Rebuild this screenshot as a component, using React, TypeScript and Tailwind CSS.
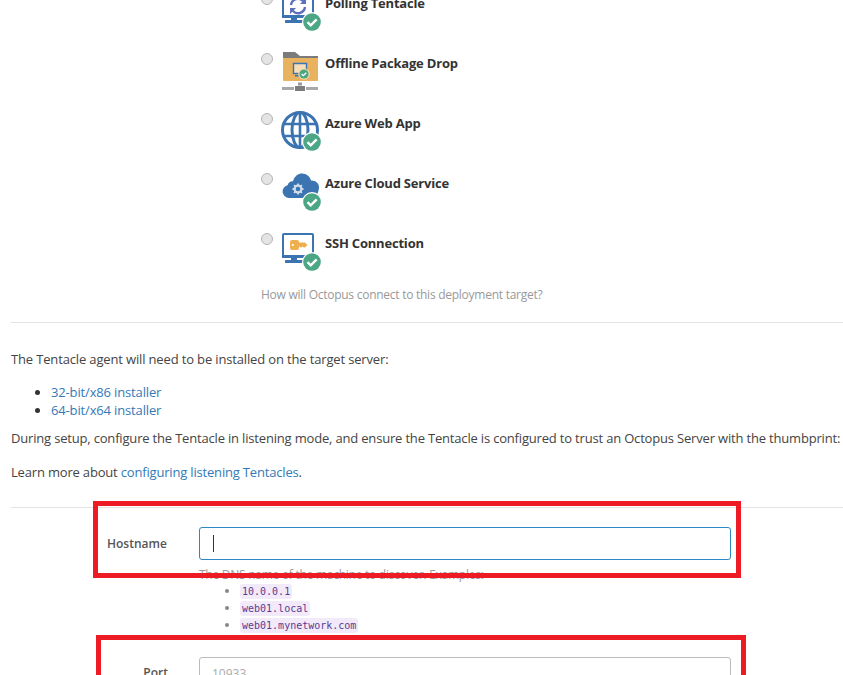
import React from "react";

const Badge = () => (
  <g>
    <circle cx="30" cy="30" r="10" fill="#fff" />
    <circle cx="30" cy="30" r="8.8" fill="#4aa685" />
    <path d="M25.5 30.2l3.2 3.2 6-6" fill="none" stroke="#fff" strokeWidth="2.4" />
  </g>
);

const Monitor = ({ children }: { children?: React.ReactNode }) => (
  <g>
    <path d="M1 3a1 1 0 0 1 1-1h28a1 1 0 0 1 1 1v22h-30z" fill="#fff" stroke="#3b74b0" strokeWidth="2" />
    <rect x="0" y="23" width="24" height="3" fill="#3b74b0" />
    <rect x="9" y="26" width="6" height="2" fill="#3b74b0" />
    <rect x="3" y="28" width="18" height="3" rx="0.5" fill="#3b74b0" />
    {children}
  </g>
);

const icons: Record<string, React.ReactNode> = {
  polling: (
    <Monitor>
      <path d="M9 13a7 7 0 0 1 12-4l2 2M23 15a7 7 0 0 1-12 4l-2-2" fill="none" stroke="#5d6fbd" strokeWidth="2.4" />
      <path d="M24 6v6h-6zM8 22v-6h6z" fill="#5d6fbd" />
    </Monitor>
  ),
  offline: (
    <g>
      <path d="M1 6V0h12l5 4h18v2z" fill="#7b7b7b" />
      <rect x="1" y="6" width="35" height="23" rx="1" fill="#e8b25e" />
      <path d="M11.5 11.500h13v10h-13z" fill="#f6dfb8" stroke="#3b74b0" strokeWidth="1.4" />
      <rect x="13" y="23" width="7" height="1.5" fill="#3b74b0" />
      <circle cx="22" cy="22" r="5.8" fill="#f3d9a8" />
      <circle cx="22" cy="22" r="4.6" fill="#4aa685" />
      <path d="M19.6 22l1.700 1.700 3-3" fill="none" stroke="#fff" strokeWidth="1.3" />
      <rect x="16" y="30.500" width="4" height="3" fill="#9a9a9a" />
      <rect x="13" y="34" width="10" height="5" fill="#7d7d7d" />
      <rect x="0" y="35" width="12" height="3" fill="#a8a8a8" />
      <rect x="24" y="35" width="12" height="3" fill="#a8a8a8" />
    </g>
  ),
  web: (
    <g fill="none" stroke="#3b74b0" strokeWidth="3">
      <circle cx="18" cy="18" r="17.500" />
      <ellipse cx="18" cy="18" rx="8" ry="17.500" />
      <path d="M18 0v36M1.500 12h33M1.500 24h33" strokeWidth="2.600" />
    </g>
  ),
  cloud: (
    <g transform="translate(0 -6)">
      <path d="M7 32a6.500 6.500 0 0 1-1.500-12.800C6.500 16 9 14.800 11 15.200 12.500 9.800 16.500 7.500 20 7.500c4.500 0 8 3 9 7 4-.5 8 2.500 8 6.500 0 5-3 11-7 11z" fill="#3b74b0" />
      <circle cx="16" cy="23" r="3.400" fill="none" stroke="#cfdcec" strokeWidth="2.200" />
      <path d="M16 17.500v2.200M16 26.300v2.200M10.500 23h2.200M19.300 23h2.200M12.100 19.100l1.600 1.600M18.300 25.300l1.600 1.600M12.100 26.900l1.600-1.600M18.300 20.700l1.600-1.600" stroke="#cfdcec" strokeWidth="1.800" />
    </g>
  ),
  ssh: (
    <Monitor>
      <rect x="8" y="8" width="9" height="10" rx="2" fill="#eeb04f" />
      <path d="M16 10.500h7l2.500 2.500-2.500 2.500h-1.500l-1-1-1 1h-1l-1-1-1 1h-1z" fill="#eeb04f" />
      <circle cx="10.800" cy="13" r="1.100" fill="#fff" />
    </Monitor>
  ),
};

const targets = [
  { key: "polling", label: "Polling Tentacle", badge: true },
  { key: "offline", label: "Offline Package Drop", badge: false },
  { key: "web", label: "Azure Web App", badge: true },
  { key: "cloud", label: "Azure Cloud Service", badge: true },
  { key: "ssh", label: "SSH Connection", badge: true },
];

const Radio = () => (
  <span className="block w-[12px] h-[12px] rounded-full bg-[#e4e4e4] border border-[#b5b5b5]" />
);

const Code = ({ children }: { children: React.ReactNode }) => (
  <code className="rounded-[3px] bg-[#f2eaf8] px-[2px] py-[2px] text-[#5b3a94] text-[10px] leading-[14px]" style={{ fontFamily: '"DejaVu Sans Mono", monospace' }}>
    {children}
  </code>
);

export default function App() {
  return (
    <div
      className="relative w-[843px] h-[675px] overflow-hidden bg-white text-[13px] text-[#444]"
      style={{ fontFamily: '"Open Sans", "Noto Sans", sans-serif' }}
    >
      <div className="px-[11px] pr-0 -mt-[28px]">
        <div className="pl-[250px]">
          {targets.map((t) => (
            <div key={t.key} className="flex h-[60px]">
              <div className="pt-[21px] w-[21px]"><Radio /></div>
              <svg width="40" height="40" viewBox="0 0 40 40" className="mt-[20px] overflow-visible">
                {icons[t.key]}
                {t.badge && <Badge />}
              </svg>
              <div className="pl-[3px] pt-[21px] font-bold text-[13px] leading-[20px] text-[#333] tracking-[-0.2px]">{t.label}</div>
            </div>
          ))}
          <p className="text-[12px] leading-[16px] mt-[15px] text-[#999] tracking-[-0.26px]">How will Octopus connect to this deployment target?</p>
        </div>
        <hr className="mt-[19px] border-[#e3e3e3]" />
        <p className="mt-[26px] leading-[20px] tracking-[-0.15px]">The Tentacle agent will need to be installed on the target server:</p>
        <ul className="mt-[14px] pl-[40px] list-disc leading-[18px] tracking-[-0.15px] text-[#333]">
          <li><a className="text-[#337ab7]">32-bit/x86 installer</a></li>
          <li><a className="text-[#337ab7]">64-bit/x64 installer</a></li>
        </ul>
        <p className="mt-[9px] leading-[20px] tracking-[-0.18px] whitespace-nowrap">During setup, configure the Tentacle in listening mode, and ensure the Tentacle is configured to trust an Octopus Server with the thumbprint:</p>
        <p className="mt-[14px] leading-[20px] tracking-[-0.18px]">Learn more about <a className="text-[#337ab7]">configuring listening Tentacles</a>.</p>
        <hr className="mt-[25px] border-[#e3e3e3]" />
        <div className="mt-[19px] flex items-center">
          <label className="w-[188px] pl-[96px] font-semibold text-[12px] text-[#555]">Hostname</label>
          <div className="w-[532px] h-[33px] rounded-[3px] border border-[#2d87c4] flex items-center pl-[13px]">
            <span className="w-px h-[17px] bg-[#333]" />
          </div>
        </div>
        <div className="ml-[188px] mt-[7px]">
          <p className="text-[12px] leading-[16px] text-[#999] tracking-[-0.26px]">The DNS name of the machine to discover. Examples:</p>
          <ul className="list-disc pl-[41px] -mt-[1px] text-[#888] text-[12px]">
            <li className="h-[17px] leading-[17px]"><Code>10.0.0.1</Code></li>
            <li className="h-[17px] leading-[17px]"><Code>web01.local</Code></li>
            <li className="h-[17px] leading-[17px]"><Code>web01.mynetwork.com</Code></li>
          </ul>
        </div>
        <div className="mt-[24px] flex items-start">
          <label className="w-[188px] pr-[31px] pt-[7px] text-right font-semibold text-[12px] text-[#555]">Port</label>
          <div className="w-[532px] h-[33px] rounded-[3px] border border-[#bbb] pl-[12px] pt-[7px] text-[12px] text-[#aaa]">10933</div>
        </div>
      </div>
      <div className="absolute left-[93px] top-[501px] w-[648px] h-[77px] border-[5px] border-[#ed1c24]" />
      <div className="absolute left-[96px] top-[635px] w-[650px] h-[60px] border-[5px] border-[#ed1c24]" />
    </div>
  );
}
